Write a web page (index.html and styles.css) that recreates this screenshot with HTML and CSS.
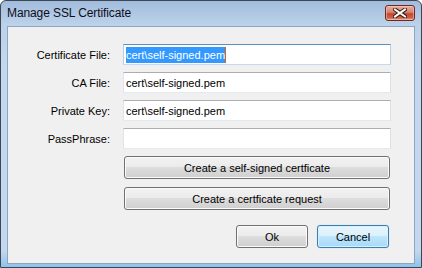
FILE: index.html
```html
<!DOCTYPE html>
<html>
<head>
<meta charset="utf-8">
<link rel="stylesheet" href="styles.css">
</head>
<body>
<div class="window">
  <div class="titlebar">
    <span class="title">Manage SSL Certificate</span>
    <div class="close">
      <svg width="14" height="10" viewBox="0 0 14 10">
        <path d="M2 1.5 L12 8.5 M12 1.5 L2 8.5" stroke="#3b1a12" stroke-width="4" stroke-linecap="square" fill="none"/>
        <path d="M2 1.5 L12 8.5 M12 1.5 L2 8.5" stroke="#ffffff" stroke-width="2" stroke-linecap="square" fill="none"/>
      </svg>
    </div>
  </div>
  <div class="client">
    <div class="form">
      <label class="label">Certificate File:</label>
      <div class="field focused"><span class="sel">cert\self-signed.pem</span><span class="caret"></span></div>
      <label class="label">CA File:</label>
      <div class="field">cert\self-signed.pem</div>
      <label class="label">Private Key:</label>
      <div class="field">cert\self-signed.pem</div>
      <label class="label">PassPhrase:</label>
      <div class="field"></div>
      <div class="btn wide first">Create a self-signed certficate</div>
      <div class="btn wide second">Create a certficate request</div>
    </div>
    <div class="actions">
      <div class="btn small">Ok</div>
      <div class="btn small default">Cancel</div>
    </div>
  </div>
</div>
</body>
</html>
```
FILE: styles.css
```css
html, body {
  margin: 0;
  padding: 0;
  background: #ffffff;
}
body {
  font-family: "Liberation Sans", Arial, sans-serif;
  font-size: 11px;
  color: #000;
}
.window {
  width: 422px;
  height: 268px;
  box-sizing: border-box;
  border: 1px solid #3c4654;
  border-radius: 6px 6px 0 0;
  background: linear-gradient(to bottom, #a2bcdc 0px, #bcd2ea 24px, #c3d7ee 60px, #c3d7ee 250px, #8cc4ec 266px);
  display: flex;
  flex-direction: column;
  overflow: hidden;
}
.titlebar {
  height: 25px;
  flex: none;
  display: flex;
  align-items: center;
  justify-content: space-between;
  padding: 0 5px 0 6px;
  box-sizing: border-box;
}
.title {
  font-size: 12px;
  color: #0d0d1a;
  letter-spacing: -0.1px;
  margin-top: -1px;
}
.close {
  width: 30px;
  height: 16px;
  box-sizing: border-box;
  border: 1px solid #6a2a20;
  border-radius: 3px;
  background: linear-gradient(to bottom, #e8b0a2 0%, #d8806c 45%, #c24a34 55%, #c95a43 80%, #e39a86 100%);
  box-shadow: inset 0 0 0 1px rgba(255, 220, 210, 0.45);
  display: flex;
  align-items: center;
  justify-content: center;
  margin-top: -2px;
  margin-right: 1px;
}
.close svg {
  display: block;
}
.client {
  flex: 1;
  margin: 0 6px 3px 6px;
  border: 1px solid #8ea5c2;
  background: #f0f0f0;
  display: flex;
  flex-direction: column;
}
.form {
  display: grid;
  grid-template-columns: 102px 268px;
  grid-template-rows: 21px 21px 21px 21px 23px 23px;
  column-gap: 13px;
  row-gap: 7px;
  padding-top: 17px;
}
.label {
  text-align: right;
  align-self: center;
  white-space: nowrap;
}
.field {
  box-sizing: border-box;
  height: 21px;
  border: 1px solid;
  border-color: #abadb3 #dbdfe6 #e3e9ef #e2e3ea;
  background: #ffffff;
  padding: 0 2px;
  display: flex;
  align-items: center;
  white-space: nowrap;
}
.field.focused {
  border-color: #5f8fc2 #b5cfe7 #c5daed #b5cfe7;
}
.sel {
  background: #3399ff;
  color: #ffffff;
  line-height: 16px;
  display: inline-block;
}
.caret {
  display: inline-block;
  width: 1px;
  height: 16px;
  background: #cc6a10;
}
.btn {
  box-sizing: border-box;
  border: 1px solid #707070;
  border-radius: 3px;
  background: linear-gradient(to bottom, #f2f2f2 0%, #ebebeb 50%, #dddddd 50%, #cfcfcf 100%);
  box-shadow: inset 0 0 0 1px #fbfbfb;
  display: flex;
  align-items: center;
  justify-content: center;
  white-space: nowrap;
}
.wide {
  grid-column: 2;
  height: 23px;
  margin: 0 1px;
}
.first {
  grid-row: 5;
}
.second {
  grid-row: 6;
  margin-top: 1px;
}
.actions {
  display: flex;
  justify-content: flex-end;
  gap: 9px;
  padding-right: 25px;
  margin-top: 16px;
}
.small {
  width: 72px;
  height: 23px;
}
.default {
  border-color: #3c7fb1;
  background: linear-gradient(to bottom, #eaf6fd 0%, #d9f0fc 50%, #bee6fd 50%, #a7d9f5 100%);
  box-shadow: inset 0 0 0 1px #d8f0fb, 0 0 1px #7fc6f0;
}
```
